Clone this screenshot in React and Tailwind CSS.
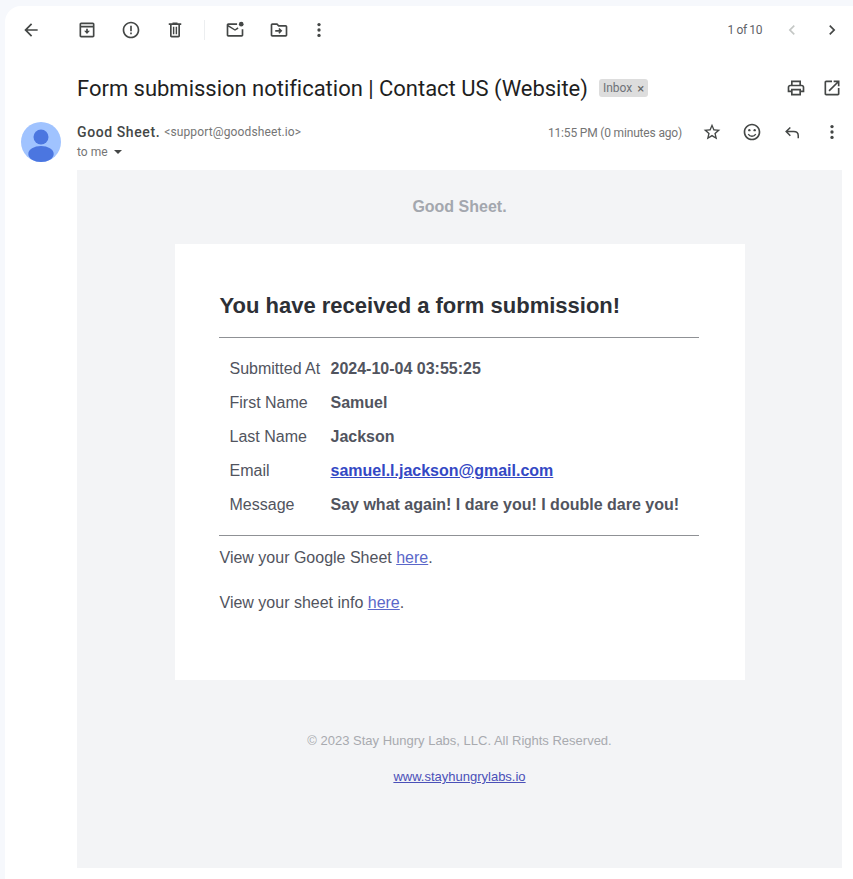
import React from "react";

function Icon({ children, className = "w-5 h-5 text-[#444746]", box = "w-11" }) {
  return (
    <div className={`${box} h-10 flex items-center justify-center shrink-0`}>
      <svg viewBox="0 0 24 24" fill="currentColor" className={className}>
        {children}
      </svg>
    </div>
  );
}

const MoreDots = () => (
  <>
    <circle cx="12" cy="5.5" r="2" />
    <circle cx="12" cy="12" r="2" />
    <circle cx="12" cy="18.5" r="2" />
  </>
);

const rows = [
  ["Submitted At", "2024-10-04 03:55:25"],
  ["First Name", "Samuel"],
  ["Last Name", "Jackson"],
  ["Email", "samuel.l.jackson@gmail.com"],
  ["Message", "Say what again! I dare you! I double dare you!"],
];

export default function App() {
  return (
    <div className="h-[879px] w-[853px] overflow-hidden bg-[#f6f8fc] pt-[6px] pl-[5px] font-['Liberation_Sans',sans-serif]">
      <div className="h-full bg-white rounded-tl-2xl">
        {/* Toolbar */}
        <div className="h-12 flex items-center justify-between pr-px">
          <div className="flex items-center">
            <div className="ml-[6px] mr-[14px]">
              <Icon box="w-10">
                <path d="M20 11H7.83l5.59-5.59L12 4l-8 8 8 8 1.41-1.41L7.83 13H20v-2z" />
              </Icon>
            </div>
            <Icon>
              <path d="M19 3H5c-1.1 0-2 .9-2 2v14c0 1.1.9 2 2 2h14c1.1 0 2-.9 2-2V5c0-1.100-.9-2-2-2zM5 5h14v2H5V5zm0 14V9h14v10H5z" />
              <path d="M11 10.500V13H8.500l3.500 3.800 3.500-3.800H13v-2.500h-2z" />
            </Icon>
            <Icon>
              <path d="M12 2C6.47 2 2 6.47 2 12s4.47 10 10 10 10-4.47 10-10S17.53 2 12 2zm0 18c-4.41 0-8-3.59-8-8s3.59-8 8-8 8 3.59 8 8-3.59 8-8 8z" />
              <path d="M11 7h2v6.500h-2zM11 15h2v2h-2z" />
            </Icon>
            <Icon>
              <path d="M15 4V3H9v1H4.500v2H6v13c0 1.100.9 2 2 2h8c1.100 0 2-.9 2-2V6h1.500V4H15zm1 15H8V6h8v13z" />
              <path d="M9.500 8h1.700v9H9.500zM12.800 8h1.700v9h-1.700z" />
            </Icon>
            <div className="ml-[7px] mr-2 w-px h-5 bg-[#eceef0]" />
            <Icon>
              <path d="M14.500 4H4c-1.100 0-2 .9-2 2v12c0 1.100.9 2 2 2h16c1.100 0 2-.9 2-2v-7h-2v7H4V8l8 5 4.200-2.600-1-1.700L12 11 4 6h10.500V4z" />
              <circle cx="19.500" cy="5" r="2.800" />
            </Icon>
            <Icon>
              <path d="M20 6h-8l-2-2H4c-1.100 0-2 .9-2 2v12c0 1.100.9 2 2 2h16c1.100 0 2-.9 2-2V8c0-1.100-.9-2-2-2zm0 12H4V6h5.200l2 2H20v10z" />
              <path d="M12.500 9.500 11.200 10.800l1.200 1.200H7.500v2h4.900l-1.200 1.200 1.300 1.300 3.500-3.500-3.500-3.500z" />
            </Icon>
            <Icon box="w-9">
              <MoreDots />
            </Icon>
          </div>
          <div className="flex items-center">
            <span className="mr-[10px] text-[12px] tracking-[-0.4px] text-[#5f6368] font-['Roboto',sans-serif]">1 of 10</span>
            <Icon box="w-10" className="w-5 h-5 text-[#c4c7c5]">
              <path d="M15.410 7.410 14 6l-6 6 6 6 1.410-1.410L10.830 12z" />
            </Icon>
            <Icon box="w-10">
              <path d="M8.590 16.590 10 18l6-6-6-6-1.410 1.410L13.170 12z" />
            </Icon>
          </div>
        </div>

        {/* Subject */}
        <div className="mt-[10px] h-12 flex items-center justify-between pl-[72px] pr-px">
          <div className="flex items-center">
            <h1 className="text-[22px] text-[#1f1f1f] font-normal tracking-[-0.02px] font-['Roboto',sans-serif]">
              Form submission notification | Contact US (Website)
            </h1>
            <span className="ml-[11px] h-[18px] px-1 flex items-center gap-[5px] rounded-[3px] bg-[#dddddd] text-[12px] text-[#6e7278] font-['Roboto',sans-serif]">
              Inbox
              <span className="text-[13px] leading-none text-[#666666]">×</span>
            </span>
          </div>
          <div className="flex items-center">
            <Icon box="w-8">
              <path d="M19 8h-1V3H6v5H5c-1.660 0-3 1.340-3 3v6h4v4h12v-4h4v-6c0-1.660-1.340-3-3-3zM8 5h8v3H8V5zm8 12v2H8v-4h8v2zm2-2v-2H6v2H4v-4c0-.55.45-1 1-1h14c.55 0 1 .45 1 1v4h-2z" />
            </Icon>
            <Icon box="w-10">
              <path d="M19 19H5V5h7V3H5c-1.110 0-2 .9-2 2v14c0 1.100.89 2 2 2h14c1.100 0 2-.9 2-2v-7h-2v7zM14 3v2h3.590l-9.830 9.830 1.410 1.410L19 6.410V10h2V3h-7z" />
            </Icon>
          </div>
        </div>

        {/* Sender */}
        <div className="mt-[10px] h-12 flex justify-between pl-4 pr-px">
          <div className="flex">
            <svg viewBox="0 0 40 40" className="w-10 h-10 shrink-0">
              <circle cx="20" cy="20" r="20" fill="#a0c3ff" />
              <circle cx="20" cy="15" r="7.500" fill="#4b76e0" />
              <ellipse cx="20" cy="32" rx="12.700" ry="8" fill="#4b76e0" />
            </svg>
            <div className="ml-4 font-['Roboto',sans-serif]">
              <div className="h-5 flex items-center">
                <span className="text-[14px] font-medium tracking-[0.6px] text-[#444746]">Good Sheet.</span>
                <span className="ml-1 text-[12px] tracking-[0.13px] text-[#757575]">&lt;support@goodsheet.io&gt;</span>
              </div>
              <div className="h-5 flex items-center text-[12px] text-[#757575]">
                to me
                <span className="ml-[6px] w-0 h-0 border-x-[4px] border-x-transparent border-t-[4px] border-t-[#444746]" />
              </div>
            </div>
          </div>
          <div className="flex items-start -mt-[10px]">
            <span className="mr-[10px] mt-[12px] text-[12px] tracking-[-0.17px] text-[#757575] font-['Roboto',sans-serif]">
              11:55 PM (0 minutes ago)
            </span>
            <Icon box="w-10">
              <path d="M22 9.240l-7.190-.62L12 2 9.190 8.630 2 9.240l5.460 4.730L5.820 21 12 17.270 18.180 21l-1.630-7.030L22 9.240zM12 15.400l-3.760 2.270 1-4.280-3.320-2.880 4.380-.38L12 6.100l1.710 4.040 4.380.38-3.320 2.880 1 4.280L12 15.400z" />
            </Icon>
            <Icon box="w-10">
              <path d="M12 2C6.470 2 2 6.470 2 12s4.470 10 10 10 10-4.470 10-10S17.530 2 12 2zm0 18c-4.410 0-8-3.590-8-8s3.590-8 8-8 8 3.590 8 8-3.590 8-8 8z" />
              <circle cx="8.800" cy="9.800" r="1.400" />
              <circle cx="15.200" cy="9.800" r="1.400" />
              <path d="M7.500 14.500c1 1.700 2.600 2.600 4.500 2.600s3.500-.9 4.500-2.600" fill="none" stroke="currentColor" strokeWidth="1.600" />
            </Icon>
            <Icon box="w-10">
              <path d="M10 6.500 5 11.500l5 5M5 11.500h9c3.500 0 5.500 2 5.500 5v3" fill="none" stroke="currentColor" strokeWidth="1.800" />
            </Icon>
            <Icon box="w-10">
              <MoreDots />
            </Icon>
          </div>
        </div>

        {/* Email body */}
        <div className="ml-[72px] mr-[11px] h-[698px] bg-[#f3f4f6] flex flex-col items-center">
          <div className="mt-[27px] h-5 flex items-center text-[16px] font-bold text-[#a3a7ae]">Good Sheet.</div>
          <div className="mt-[27px] w-[570px] h-[436px] bg-white pl-11 pr-[46px] pt-[48px]">
            <h2 className="ml-px text-[22px] leading-7 font-bold text-[#2d3036]">
              You have received a form submission!
            </h2>
            <hr className="mt-[17px] border-t border-[#8f9195]" />
            <div className="mt-[14px] pl-[11px]">
              {rows.map(([label, value]) => (
                <div key={label} className="grid grid-cols-[101px_1fr] h-[34px] items-center text-[16px] text-[#51545e]">
                  <span>{label}</span>
                  {label === "Email" ? (
                    <a href="#" className="font-bold text-[#3348c4] underline">{value}</a>
                  ) : (
                    <span className="font-bold">{value}</span>
                  )}
                </div>
              ))}
            </div>
            <hr className="mt-[13px] border-t border-[#8f9195]" />
            <p className="ml-px mt-[12px] h-5 leading-5 text-[16px] text-[#51545e]">
              View your Google Sheet <a href="#" className="text-[#5a67c9] underline">here</a>.
            </p>
            <p className="ml-px mt-[25px] h-5 leading-5 text-[16px] text-[#51545e]">
              View your sheet info <a href="#" className="text-[#5a67c9] underline">here</a>.
            </p>
          </div>
          <p className="mt-[51px] h-5 leading-5 text-[13px] text-[#a8aaaf]">© 2023 Stay Hungry Labs, LLC. All Rights Reserved.</p>
          <a href="#" className="mt-[16px] h-5 leading-5 text-[13px] text-[#4a50b8] underline">www.stayhungrylabs.io</a>
        </div>
      </div>
    </div>
  );
}
